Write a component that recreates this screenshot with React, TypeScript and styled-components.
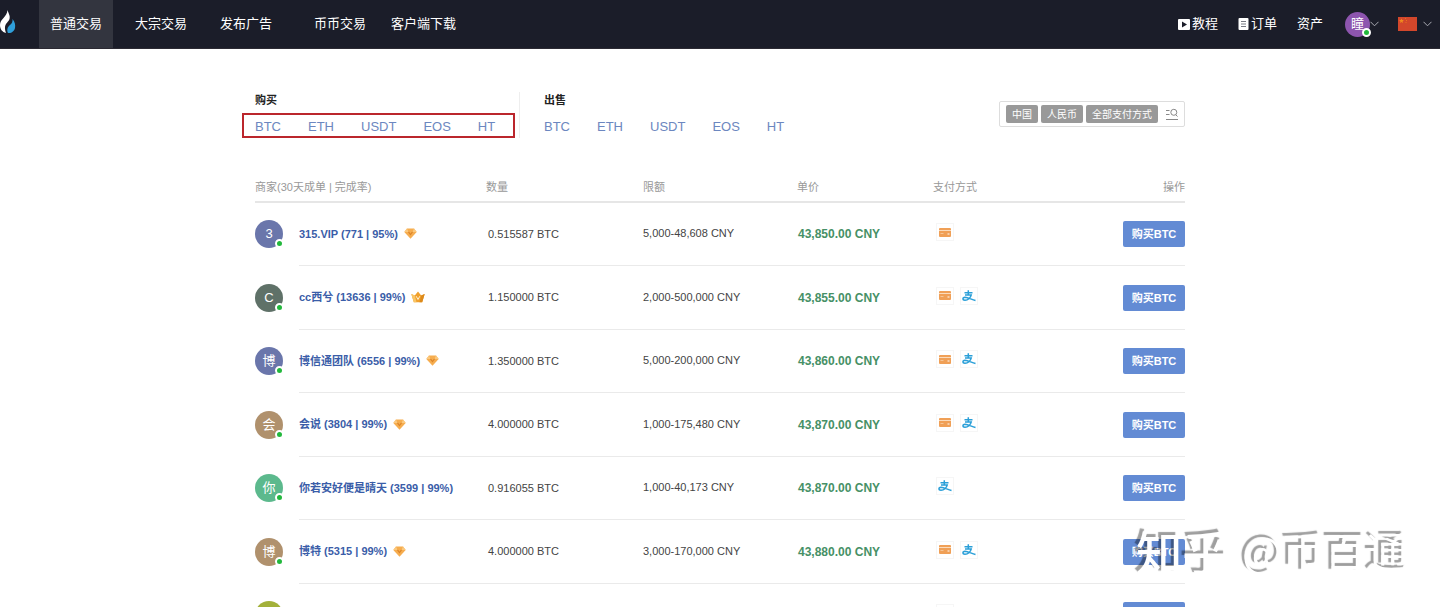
import React from "react";
import styled, { createGlobalStyle } from "styled-components";

const GlobalStyle = createGlobalStyle`
  * { box-sizing: border-box; }
  body {
    margin: 0;
    background: #fff;
    color: #444;
    font-family: "Liberation Sans", "Noto Sans CJK SC", sans-serif;
    font-size: 11px;
    line-height: 16px;
  }
  a { color: inherit; text-decoration: none; }
  button { font-family: inherit; cursor: pointer; }
`;

const Page = styled.div`
  height: 100vh;
  overflow: hidden;
`;

const TopBar = styled.header`
  display: flex;
  align-items: center;
  justify-content: space-between;
  height: 49px;
  padding-right: 8px;
  background: #1b1d29;
  border-bottom: 1px solid #2c2a33;
  color: #fff;
  font-size: 13px;
`;

const Nav = styled.nav`
  display: flex;
  align-items: center;
  height: 100%;
`;

const Logo = styled.a`
  display: flex;
  width: 39px;
  padding-bottom: 4px;
`;

const NavLink = styled.a<{ $active?: boolean; $spaced?: boolean }>`
  display: flex;
  align-items: center;
  height: 100%;
  padding: 0 11px;
  margin-right: ${(p) => (p.$spaced ? "31px" : "11px")};
  background: ${(p) => (p.$active ? "#33353f" : "transparent")};
`;

const PlainLink = styled.a`
  margin-right: 25px;
`;

const Tools = styled.div`
  display: flex;
  align-items: center;
  height: 100%;
`;

const ToolLink = styled.a`
  display: flex;
  align-items: center;
  gap: 2px;
  margin-right: 20px;
`;

const MenuButton = styled.button`
  display: flex;
  align-items: center;
  padding: 0;
  margin-left: 2px;
  border: 0;
  background: none;
  color: #fff;
`;

const UserMenu = styled(MenuButton)`
  margin-right: 17px;
`;

const FlagMenu = styled(MenuButton)`
  gap: 6px;
`;

const Avatar = styled.span<{ $color: string; $small?: boolean }>`
  position: relative;
  display: flex;
  align-items: center;
  justify-content: center;
  width: ${(p) => (p.$small ? "25px" : "28px")};
  height: ${(p) => (p.$small ? "25px" : "28px")};
  border-radius: 50%;
  background: ${(p) => p.$color};
  color: #fff;
  font-size: 13px;
  line-height: 16px;
`;

const Online = styled.i`
  position: absolute;
  right: -1px;
  bottom: 0;
  width: 9px;
  height: 9px;
  border: 2px solid #fff;
  border-radius: 50%;
  background: #22b83c;
`;

const Content = styled.main`
  max-width: 930px;
  margin: 0 auto;
`;

const Filters = styled.section`
  display: flex;
  align-items: flex-start;
  padding-top: 43px;
  height: 122px;
`;

const Side = styled.div<{ $divided?: boolean }>`
  height: 46px;
  width: ${(p) => (p.$divided ? "265px" : "auto")};
  margin-right: ${(p) => (p.$divided ? "24px" : "0")};
  border-right: ${(p) => (p.$divided ? "1px solid #eee" : "0")};
`;

const SideTitle = styled.h2`
  margin: 0;
  font-size: 11px;
  line-height: 16px;
  color: #222;
`;

const CoinList = styled.div<{ $marked?: boolean }>`
  display: flex;
  align-items: center;
  gap: 27px;
  width: max-content;
  height: 25px;
  margin: 5px 0 0 -13px;
  padding: 2px 18px 0 11px;
  border: 2px solid ${(p) => (p.$marked ? "#bb262c" : "transparent")};
  color: #6c87c0;
  font-size: 13px;
`;

const FilterBox = styled.div`
  display: flex;
  align-items: center;
  gap: 3px;
  height: 26px;
  margin: 9px 0 0 auto;
  padding: 0 6px;
  border: 1px solid #ddd;
  border-radius: 2px;
`;

const Tag = styled.button`
  height: 18px;
  padding: 1px 6px 0;
  border: 0;
  border-radius: 2px;
  background: #999;
  color: #fff;
  font-size: 10px;
  line-height: 17px;
`;

const SearchButton = styled.button`
  display: flex;
  margin-left: 5px;
  padding: 0;
  border: 0;
  background: none;
`;

const OfferTable = styled.table`
  width: 100%;
  table-layout: fixed;
  border-collapse: separate;
  border-spacing: 0;
`;

const Col = styled.col<{ $width?: number }>`
  width: ${(p) => (p.$width ? p.$width + "px" : "auto")};
`;

const HeadCell = styled.th<{ $end?: boolean }>`
  height: 32px;
  padding: 2px 0 0;
  border-bottom: 2px solid #e6e6e6;
  color: #999;
  font-weight: 400;
  text-align: ${(p) => (p.$end ? "right" : "left")};
`;

const Row = styled.tr`
  height: 63px;
  &:nth-child(even) { height: 64px; }
`;

const Cell = styled.td<{ $line?: boolean; $end?: boolean }>`
  padding: 0;
  border-bottom: 1px solid ${(p) => (p.$line === false ? "transparent" : "#eaeaea")};
  text-align: ${(p) => (p.$end ? "right" : "left")};
`;

const AmountCell = styled(Cell)`
  padding: 0 0 1px 2px;
`;

const LimitCell = styled(Cell)`
  padding-bottom: 2px;
`;

const Merchant = styled.a`
  display: flex;
  align-items: center;
  gap: 6px;
  padding-bottom: 1px;
  color: #3a5da8;
  font-weight: 700;
  white-space: nowrap;
`;

const PriceCell = styled(Cell)`
  padding-left: 1px;
  color: #469066;
  font-size: 12px;
  font-weight: 700;
`;

const Methods = styled.div`
  display: flex;
  gap: 6px;
  padding: 0 0 4px 3px;
`;

const Method = styled.span`
  display: flex;
  align-items: center;
  justify-content: center;
  width: 18px;
  height: 18px;
  border: 1px solid #f6f6f6;
`;

const BuyButton = styled.button`
  width: 62px;
  height: 26px;
  padding: 0 0 2px;
  border: 0;
  border-radius: 2px;
  background: #638bd4;
  color: #fff;
  font-size: 11px;
  font-weight: 700;
  vertical-align: middle;
`;

const Watermark = styled.div`
  position: fixed;
  right: 32px;
  bottom: 29px;
  display: flex;
  gap: 14px;
  color: #fff;
  font-family: "Noto Sans CJK SC", sans-serif;
  font-size: 42px;
  line-height: 56px;
  text-shadow: -3px -3px 1px rgba(0, 0, 0, 0.38);
  pointer-events: none;
`;

const WatermarkBrand = styled.span`
  font-size: 46px;
  font-weight: 500;
`;

const Flame = () => (
  <svg width="16" height="26" viewBox="0 0 16 26" aria-hidden="true">
    <path d="M7.5 1C8 4 10.500 6 9.500 10C8.500 13 5.500 14 5 18C4.700 20 5.500 22.500 6 24C2 23 0 20 0 16C0 10 7 8 7.500 1Z" fill="#fff" />
    <path d="M12.500 10C15 13 15.500 16 15 19C14.400 22 11.500 24.500 8 24C6.500 21 7.500 18 10 16C12 14.500 12.800 12.500 12.500 10Z" fill="#2f9fda" />
  </svg>
);

const PlayIcon = () => (
  <svg width="12" height="11" viewBox="0 0 12 11" aria-hidden="true">
    <rect width="12" height="11" rx="1" fill="#fff" />
    <path d="M4 2.500L9 5.500L4 8.500Z" fill="#1b1d29" />
  </svg>
);

const OrderIcon = () => (
  <svg width="11" height="12" viewBox="0 0 11 12" aria-hidden="true">
    <rect x="0.500" width="10" height="12" rx="1" fill="#fff" />
    <path d="M3 3.500H8M3 6H8M3 8.500H8" stroke="#777a83" />
  </svg>
);

const Chevron = () => (
  <svg width="9" height="6" viewBox="0 0 9 6" fill="none" stroke="#a9aab2" aria-hidden="true">
    <path d="M0.500 0.800L4.500 4.800L8.500 0.800" />
  </svg>
);

const Flag = () => (
  <svg width="19" height="14" viewBox="0 0 19 14" aria-hidden="true">
    <rect width="19" height="14" fill="#d3472b" />
    <path d="M3.500 1.500L4.200 3.100H6L4.600 4.200L5.100 6L3.500 5L1.900 6L2.400 4.200L1 3.100H2.800Z" fill="#f08a1d" />
    <path d="M7 1.500h1M8 3.500h1M7.500 5.500h1" stroke="#e8721e" />
  </svg>
);

const Diamond = () => (
  <svg width="13" height="11" viewBox="0 0 13 11" aria-hidden="true">
    <path d="M3 0.500H10L12.700 4L6.500 10.700L0.300 4Z" fill="#f6ad4f" />
    <path d="M3 0.500L4.500 4H0.300ZM10 0.500L8.500 4H12.700Z" fill="#fbc97f" />
    <path d="M4.500 3.800L6.500 6.500L8.500 3.800" fill="none" stroke="#dc8429" strokeWidth="1.100" />
  </svg>
);

const Crown = () => (
  <svg width="14" height="12" viewBox="0 0 14 12" aria-hidden="true">
    <path d="M0.300 3L3.800 4.600L7 0.500L10.200 4.600L13.700 3L11.200 11.300H2.800Z" fill="#f0a02c" />
    <path d="M0.300 3L3.800 4.600L5.500 11.300H2.800Z" fill="#f9c565" />
    <path d="M13.700 3L10.200 4.600L8.500 11.300H11.200Z" fill="#dc8a1c" />
    <path d="M5.200 5.200L7 8.500L8.800 5.200" fill="none" stroke="#fff0cf" />
  </svg>
);

const CardIcon = () => (
  <svg width="12" height="9" viewBox="0 0 12 9" role="img" aria-label="银行卡">
    <rect width="12" height="9" rx="1" fill="#f0a057" />
    <path d="M0 2.500H12" stroke="#fbdcbd" />
    <path d="M1.500 5.500H4.500" stroke="#f7c698" />
    <path d="M8.500 5.500H10.500V6.500H8.500Z" fill="#fff" />
  </svg>
);

const AlipayIcon = () => (
  <svg width="14" height="12" viewBox="0 0 14 12" fill="none" stroke="#2a9fd8" strokeWidth="1.500" role="img" aria-label="支付宝">
    <path d="M2.500 2.700H10.500M6.300 0.300V5M3 5H9.200C8.500 7.700 6 10.300 3 10.300C0.300 10.300 0.300 7.300 3 7.200C6 7.200 9.500 9.600 13.500 10.600" />
  </svg>
);

const FilterIcon = () => (
  <svg width="12" height="13" viewBox="0 0 12 13" fill="none" stroke="#888" aria-hidden="true">
    <path d="M0 2.500H3.500M0 6.500H3.500M0 11.500H12M9.800 6.800L11.500 8.500" />
    <circle cx="7.800" cy="4.300" r="3" />
  </svg>
);

const coins = ["BTC", "ETH", "USDT", "EOS", "HT"];

type Offer = {
  initial: string;
  color: string;
  name: string;
  badge?: "diamond" | "crown";
  amount: string;
  limit: string;
  price: string;
  card?: boolean;
  alipay?: boolean;
};

const offers: Offer[] = [
  { initial: "3", color: "#6a76ab", name: "315.VIP (771 | 95%)", badge: "diamond", amount: "0.515587", limit: "5,000-48,608", price: "43,850.00", card: true },
  { initial: "C", color: "#5f7168", name: "cc西兮 (13636 | 99%)", badge: "crown", amount: "1.150000", limit: "2,000-500,000", price: "43,855.00", card: true, alipay: true },
  { initial: "博", color: "#6a76ab", name: "博信通团队 (6556 | 99%)", badge: "diamond", amount: "1.350000", limit: "5,000-200,000", price: "43,860.00", card: true, alipay: true },
  { initial: "会", color: "#b0916d", name: "会说 (3804 | 99%)", badge: "diamond", amount: "4.000000", limit: "1,000-175,480", price: "43,870.00", card: true, alipay: true },
  { initial: "你", color: "#5cb98d", name: "你若安好便是晴天 (3599 | 99%)", amount: "0.916055", limit: "1,000-40,173", price: "43,870.00", alipay: true },
  { initial: "博", color: "#b0916d", name: "博特 (5315 | 99%)", badge: "diamond", amount: "4.000000", limit: "3,000-170,000", price: "43,880.00", card: true, alipay: true },
  { initial: "", color: "#a3b13a", name: "", amount: "", limit: "", price: "", card: true },
];

const OfferRow = ({ offer }: { offer: Offer }) => (
  <Row>
    <Cell $line={false}>
      <Avatar $color={offer.color}>
        {offer.initial}
        <Online />
      </Avatar>
    </Cell>
    <Cell>
      <Merchant href="#">
        {offer.name}
        {offer.badge === "diamond" && <Diamond />}
        {offer.badge === "crown" && <Crown />}
      </Merchant>
    </Cell>
    <AmountCell>{offer.amount && `${offer.amount} BTC`}</AmountCell>
    <LimitCell>{offer.limit && `${offer.limit} CNY`}</LimitCell>
    <PriceCell>{offer.price && `${offer.price} CNY`}</PriceCell>
    <Cell>
      <Methods>
        {offer.card && <Method>{offer.name && <CardIcon />}</Method>}
        {offer.alipay && <Method><AlipayIcon /></Method>}
      </Methods>
    </Cell>
    <Cell $end>
      <BuyButton type="button">{offer.name && "购买BTC"}</BuyButton>
    </Cell>
  </Row>
);

export default function App() {
  return (
    <Page>
      <GlobalStyle />
      <TopBar>
        <Nav>
          <Logo href="#" aria-label="首页"><Flame /></Logo>
          <NavLink href="#" $active>普通交易</NavLink>
          <NavLink href="#">大宗交易</NavLink>
          <NavLink href="#" $spaced>发布广告</NavLink>
          <PlainLink href="#">币币交易</PlainLink>
          <PlainLink href="#">客户端下载</PlainLink>
        </Nav>
        <Tools>
          <ToolLink href="#"><PlayIcon />教程</ToolLink>
          <ToolLink href="#"><OrderIcon />订单</ToolLink>
          <ToolLink href="#">资产</ToolLink>
          <UserMenu type="button" aria-label="账户">
            <Avatar $color="#8d55ae" $small>瞳<Online /></Avatar>
            <Chevron />
          </UserMenu>
          <FlagMenu type="button" aria-label="语言">
            <Flag />
            <Chevron />
          </FlagMenu>
        </Tools>
      </TopBar>
      <Content>
        <Filters>
          <Side $divided>
            <SideTitle>购买</SideTitle>
            <CoinList $marked>
              {coins.map((c) => <a href="#" key={c}>{c}</a>)}
            </CoinList>
          </Side>
          <Side>
            <SideTitle>出售</SideTitle>
            <CoinList>
              {coins.map((c) => <a href="#" key={c}>{c}</a>)}
            </CoinList>
          </Side>
          <FilterBox>
            <Tag type="button">中国</Tag>
            <Tag type="button">人民币</Tag>
            <Tag type="button">全部支付方式</Tag>
            <SearchButton type="button" aria-label="筛选"><FilterIcon /></SearchButton>
          </FilterBox>
        </Filters>
        <OfferTable>
          <colgroup>
            <Col $width={44} />
            <Col $width={187} />
            <Col $width={157} />
            <Col $width={154} />
            <Col $width={136} />
            <Col $width={150} />
            <Col />
          </colgroup>
          <thead>
            <tr>
              <HeadCell colSpan={2}>商家(30天成单 | 完成率)</HeadCell>
              <HeadCell>数量</HeadCell>
              <HeadCell>限额</HeadCell>
              <HeadCell>单价</HeadCell>
              <HeadCell>支付方式</HeadCell>
              <HeadCell $end>操作</HeadCell>
            </tr>
          </thead>
          <tbody>
            {offers.map((offer, i) => <OfferRow key={i} offer={offer} />)}
          </tbody>
        </OfferTable>
      </Content>
      <Watermark>
        <WatermarkBrand>知乎</WatermarkBrand>
        <span>@币百通</span>
      </Watermark>
    </Page>
  );
}
